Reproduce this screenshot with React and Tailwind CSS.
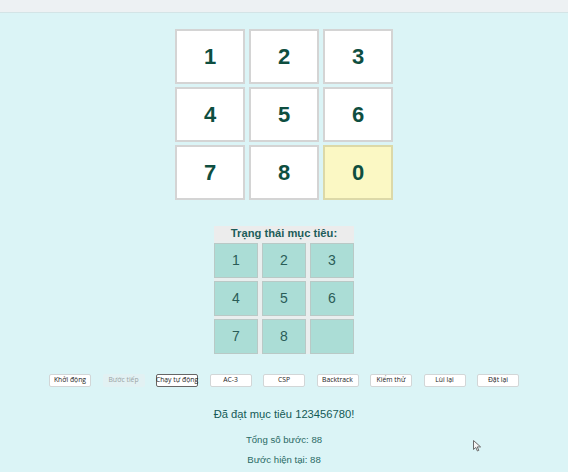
const board = ["1", "2", "3", "4", "5", "6", "7", "8", "0"];
const goal = ["1", "2", "3", "4", "5", "6", "7", "8", ""];
const buttons = [
  { label: "Khởi động" },
  { label: "Bước tiếp", disabled: true },
  { label: "Chạy tự động", focused: true },
  { label: "AC-3" },
  { label: "CSP" },
  { label: "Backtrack" },
  { label: "Kiểm thử" },
  { label: "Lùi lại" },
  { label: "Đặt lại" },
];

export default function App() {
  return (
    <div
      className="relative w-[568px] h-[472px] overflow-hidden bg-[#dbf4f6]"
      style={{ fontFamily: '"Liberation Sans", Arial, sans-serif' }}
    >
      <div className="h-[13px] bg-[#edf1f3] border-b border-[#d3e4e6]" />

      <div className="flex justify-center mt-[16px]">
        <div className="grid grid-cols-[70px_70px_70px] gap-x-[4px] gap-y-[3px]">
          {board.map((n) => (
            <div
              key={n}
              className={`h-[55px] flex items-center justify-center border-2 border-[#d4d4d4] text-[22px] font-bold text-[#0e4e40] ${
                n === "0" ? "bg-[#fbf8c4] border-[#dcd9a8]" : "bg-white"
              }`}
            >
              {n}
            </div>
          ))}
        </div>
      </div>

      <div className="flex justify-center mt-[26px]">
        <div className="w-[140px] bg-[#e9eeee]">
          <div className="h-[15px] flex items-center justify-center text-[11.2px] font-bold text-[#1d5d5a] bg-[#ececec]">
            Trạng thái mục tiêu:
          </div>
          <div className="grid grid-cols-[44px_44px_44px] gap-x-[4px] gap-y-[3px] mt-[2px]">
            {goal.map((n, i) => (
              <div
                key={i}
                className="h-[35px] flex items-center justify-center bg-[#abddd6] border border-[#b9c9c6] text-[14px] text-[#2a5c57]"
              >
                {n}
              </div>
            ))}
          </div>
        </div>
      </div>

      <div
        className="flex justify-center gap-[11.5px] mt-[20px]"
        style={{ fontFamily: '"Open Sans", "Noto Sans", sans-serif' }}
      >
        {buttons.map((b) => (
          <div
            key={b.label}
            className={`w-[42px] h-[13px] flex items-center justify-center rounded-[2px] text-[6.8px] leading-none whitespace-nowrap ${
              b.disabled
                ? "bg-[#e2f1f3] text-[#9aa3a4] border border-transparent"
                : b.focused
                ? "bg-white text-[#222] border border-[#666]"
                : "bg-white text-[#222] border border-[#d2d6d7]"
            }`}
          >
            {b.label}
          </div>
        ))}
      </div>

      <div className="flex flex-col items-center text-[#2a6a65]">
        <div className="mt-[20px] text-[11.2px] text-[#145a55] leading-[15px]">
          Đã đạt mục tiêu 123456780!
        </div>
        <div className="mt-[11px] text-[9.6px] leading-[13px]">Tổng số bước: 88</div>
        <div className="mt-[7px] text-[9.6px] leading-[13px]">Bước hiện tại: 88</div>
      </div>

      <svg
        className="absolute left-[473px] top-[440px]"
        width="9"
        height="12"
        viewBox="0 0 9 12"
      >
        <path
          d="M0.5 0.5 L0.5 9.5 L2.8 7.4 L4.4 11 L5.8 10.4 L4.3 6.9 L7.6 6.9 Z"
          fill="#f4f4f4"
          stroke="#6b6b6b"
          strokeWidth="1"
        />
      </svg>
    </div>
  );
}
